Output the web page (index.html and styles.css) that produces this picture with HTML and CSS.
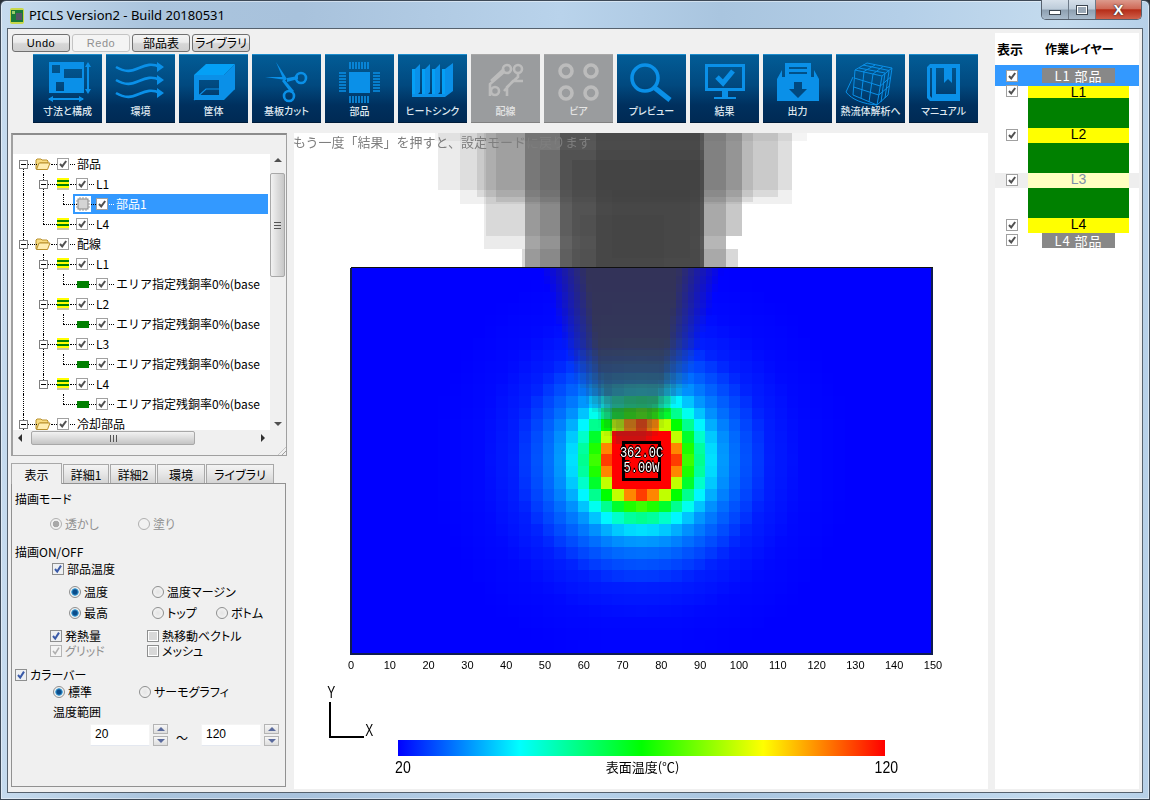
FILE: index.html
```html
<!DOCTYPE html>
<html lang="ja">
<head>
<meta charset="utf-8">
<title>PICLS Version2 - Build 20180531</title>
<link rel="stylesheet" href="styles.css">
</head>
<body>
<svg class="defs" width="0" height="0" aria-hidden="true">
  <symbol id="ck" viewBox="0 0 12 12"><rect x=".5" y=".5" width="11" height="11" fill="#fff" stroke="#a0a0a0"/><path d="M3 6l2.2 2.4L9.2 3" fill="none" stroke="#505050" stroke-width="2"/></symbol>
  <symbol id="fck" viewBox="0 0 12 12"><rect x=".5" y=".5" width="11" height="11" fill="#eef0f2" stroke="#8e8f8f"/><path d="M3 6l2.2 2.6L9 2.6" fill="none" stroke="#3a5aa8" stroke-width="2"/></symbol>
  <symbol id="fckd" viewBox="0 0 12 12"><rect x=".5" y=".5" width="11" height="11" fill="#f4f4f4" stroke="#b4b4b4"/><path d="M3 6l2.2 2.6L9 2.6" fill="none" stroke="#b0b0b0" stroke-width="1.6"/></symbol>
  <symbol id="fcko" viewBox="0 0 12 12"><rect x=".5" y=".5" width="11" height="11" fill="#fff" stroke="#8e8f8f"/><rect x="2" y="2" width="8" height="8" fill="#d8d8d8"/></symbol>
  <symbol id="folder" viewBox="0 0 16 14"><path d="M1 12V3l1-1h4l1 1h5l1 1v2H5L3 12z" fill="#f8dc80" stroke="#b8902c"/><path d="M1.500 12.500L4 6h11l-2.500 6.500z" fill="#ffeeb0" stroke="#b8902c"/></symbol>
</svg>
<div class="window">
  <header class="titlebar">
    <svg class="app-icon" viewBox="0 0 14 16"><rect width="14" height="16" rx="2" fill="#c8d84a"/><rect x="1" y="2" width="12" height="12" fill="#1a7a3a"/><rect x="6" y="5" width="6" height="7" fill="#556"/><rect x="2" y="3" width="3" height="3" fill="#9ccf6a"/></svg>
    <span class="app-title">PICLS Version2 - Build 20180531</span>
    <div class="win-controls">
      <span class="wc wc-min"><i></i></span>
      <span class="wc wc-max"><i></i></span>
      <span class="wc wc-close">X</span>
    </div>
  </header>
  <div class="client">
    <div class="main">
      <div class="top">
        <div class="cmds">
          <button class="cmd">Undo</button>
          <button class="cmd cmd-off">Redo</button>
          <button class="cmd cmd-jp">部品表</button>
          <button class="cmd cmd-jp">ライブラリ</button>
        </div>
        <div class="tools">
          <div class="tool"><svg viewBox="0 0 69 46"><path fill-rule="evenodd" d="M16 7h35v31H16zM19 10v8h8v-8zM31 14v9h18v-9zM23 27v9h8v-9z"/><path class="ln" d="M55 11v25M16 44h34"/><path d="M55 7l-3 5h6zM55 39l-3-5h6zM15 44l5-3v6zM51 44l-5-3v6z"/></svg><span>寸法と構成</span></div>
          <div class="tool"><svg viewBox="0 0 69 46"><path class="ln w" d="M10 12c10 6 16 4 23 1s13-5 21-1M10 25c10 6 16 4 23 1s13-5 21-1M10 38c10 6 16 4 23 1s13-5 21-1"/><path d="M51 7l7 5-7 5zM51 20l7 5-7 5zM51 33l7 5-7 5z"/></svg><span>環境</span></div>
          <div class="tool"><svg viewBox="0 0 69 46"><path class="lt" d="M15 20L27 9h29L45 20z"/><path d="M45 20L56 9v25L45 45z"/><path fill-rule="evenodd" d="M15 20h30v25H15zM20 25v15h20V25z"/><path class="ln n" d="M15 45l12-11h29"/></svg><span>筐体</span></div>
          <div class="tool"><svg viewBox="0 0 69 46"><path d="M24 7l11 17-3 2zM13 22l20 0 1 3z"/><path d="M32 24L42 36l-3 2L30 26z"/><path d="M35 23l11-2 0 3-11 3z"/><circle class="ring" cx="49" cy="23" r="5"/><circle class="ring" cx="37" cy="41" r="5"/></svg><span>基板カット</span></div>
          <div class="tool"><svg viewBox="0 0 69 46"><rect x="24" y="17" width="21" height="21"/><path class="ln p" d="M25 7v7M28 7v7M31 7v7M34 7v7M37 7v7M40 7v7M43 7v7M25 41v7M28 41v7M31 41v7M34 41v7M37 41v7M40 41v7M43 41v7M14 18h7M14 21h7M14 24h7M14 27h7M14 30h7M14 33h7M14 36h7M48 18h7M48 21h7M48 24h7M48 27h7M48 30h7M48 33h7M48 36h7"/></svg><span>部品</span></div>
          <div class="tool"><svg viewBox="0 0 69 46"><path d="M17 14l5-5v28l-5 5zM27 14l5-5v28l-5 5zM37 14l5-5v28l-5 5zM47 14l8-6v28l-8 6z"/><path class="lt" d="M14 14h3v28h-3zM24 14h3v28h-3zM34 14h3v28h-3zM44 14h3v28h-3z"/><path d="M14 39h33v3H14z"/></svg><span>ヒートシンク</span></div>
          <div class="tool tool-off"><svg viewBox="0 0 69 46"><circle class="ring" cx="36" cy="14" r="4"/><circle class="ring" cx="47" cy="14" r="4"/><circle class="ring" cx="24" cy="36" r="4"/><path class="ln w" d="M33 17L19 29v12M47 18v4L36 32v9M52 26H42L33 36M20 26L33 14"/></svg><span>配線</span></div>
          <div class="tool tool-off"><svg viewBox="0 0 69 46"><circle class="ring fat" cx="22" cy="16" r="6"/><circle class="ring fat" cx="47" cy="16" r="6"/><circle class="ring fat" cx="22" cy="38" r="6"/><circle class="ring fat" cx="47" cy="38" r="6"/></svg><span>ビア</span></div>
          <div class="tool"><svg viewBox="0 0 69 46"><circle class="ring fat" cx="28" cy="23" r="13"/><path class="ln heavy" d="M38 33l15 12"/></svg><span>プレビュー</span></div>
          <div class="tool"><svg viewBox="0 0 69 46"><path fill-rule="evenodd" d="M15 9h40v27H15zM18 12v21h34V12z"/><path d="M32 36h6v6h-6zM24 42h22v2H24z"/><path class="ln heavy" d="M27 22l6 6 10-12"/></svg><span>結果</span></div>
          <div class="tool"><svg viewBox="0 0 69 46"><path fill-rule="evenodd" d="M22 8h26v14H22zM26 12v2h18v-2zM26 17v2h18v-2z"/><path d="M14 24l5-9v7h32v-7l5 9v22H14z"/><path class="cut" d="M31 27h8v7h5l-9 9-9-9h5z"/></svg><span>出力</span></div>
          <div class="tool"><svg viewBox="0 0 69 46"><path class="wire" d="M19 15L31 8L56 13L46 21ZM19 15L17 40L41 50L46 21M41 50L52 40L56 13M28 17L25 43M37 19L33 47M18.300 23L44.300 31M17.700 32L42.700 40M49 18L45 47M53 16L49 43M44.300 31L54.700 22M42.700 40L53.400 31M23 13L49 18M27 10L53 15.500M27 17L39 10M37 19L47 11.500M17 22L10 37C16 45 28 49 41 50"/></svg><span>熱流体解析へ</span></div>
          <div class="tool"><svg viewBox="0 0 69 46"><path fill-rule="evenodd" d="M18 12l3-3h30v37H21l-3-3zM21 13v28l2 2V13zM27 13v26h20V13z"/><path d="M35 13h8v15l-4-4-4 4z"/></svg><span>マニュアル</span></div>
        </div>
      </div>
      <div class="work">
        <div class="left">
          <section class="treebox">
            <div class="tree">
              <div class="row"><i class="s t top"><b></b></i><div class="c c0"><svg class="fld"><use href="#folder"/></svg><i class="d d1"></i><svg class="cb"><use href="#ck"/></svg><i class="d d2"></i><span>部品</span></div></div>
              <div class="row"><i class="s v"></i><i class="s t"><b></b></i><div class="c c1"><i class="lay"></i><i class="d d3"></i><svg class="cb"><use href="#ck"/></svg><i class="d d2"></i><span>L1</span></div></div>
              <div class="row"><i class="s v"></i><i class="s v"></i><i class="s l"></i><div class="c c2 sel"><svg class="chip" viewBox="0 0 16 16"><rect width="16" height="16" fill="#fff"/><rect x="3" y="3" width="10" height="10" fill="#d4d4d4" stroke="#888"/><path d="M5 1v2M8 1v2M11 1v2M5 13v2M8 13v2M11 13v2M1 5h2M1 8h2M1 11h2M13 5h2M13 8h2M13 11h2" stroke="#999"/></svg><i class="d d4"></i><svg class="cb"><use href="#ck"/></svg><i class="d d2 w"></i><span>部品1</span></div></div>
              <div class="row"><i class="s v"></i><i class="s l"></i><div class="c c1"><i class="lay"></i><i class="d d3"></i><svg class="cb"><use href="#ck"/></svg><i class="d d2"></i><span>L4</span></div></div>
              <div class="row"><i class="s t"><b></b></i><div class="c c0"><svg class="fld"><use href="#folder"/></svg><i class="d d1"></i><svg class="cb"><use href="#ck"/></svg><i class="d d2"></i><span>配線</span></div></div>
              <div class="row"><i class="s v"></i><i class="s t"><b></b></i><div class="c c1"><i class="lay"></i><i class="d d3"></i><svg class="cb"><use href="#ck"/></svg><i class="d d2"></i><span>L1</span></div></div>
              <div class="row"><i class="s v"></i><i class="s v"></i><i class="s l"></i><div class="c c3"><i class="cu"></i><i class="d d5"></i><svg class="cb"><use href="#ck"/></svg><i class="d d2"></i><span>エリア指定残銅率0%(base</span></div></div>
              <div class="row"><i class="s v"></i><i class="s t"><b></b></i><div class="c c1"><i class="lay"></i><i class="d d3"></i><svg class="cb"><use href="#ck"/></svg><i class="d d2"></i><span>L2</span></div></div>
              <div class="row"><i class="s v"></i><i class="s v"></i><i class="s l"></i><div class="c c3"><i class="cu"></i><i class="d d5"></i><svg class="cb"><use href="#ck"/></svg><i class="d d2"></i><span>エリア指定残銅率0%(base</span></div></div>
              <div class="row"><i class="s v"></i><i class="s t"><b></b></i><div class="c c1"><i class="lay"></i><i class="d d3"></i><svg class="cb"><use href="#ck"/></svg><i class="d d2"></i><span>L3</span></div></div>
              <div class="row"><i class="s v"></i><i class="s v"></i><i class="s l"></i><div class="c c3"><i class="cu"></i><i class="d d5"></i><svg class="cb"><use href="#ck"/></svg><i class="d d2"></i><span>エリア指定残銅率0%(base</span></div></div>
              <div class="row"><i class="s v"></i><i class="s l"><b></b></i><div class="c c1"><i class="lay"></i><i class="d d3"></i><svg class="cb"><use href="#ck"/></svg><i class="d d2"></i><span>L4</span></div></div>
              <div class="row"><i class="s v"></i><i class="s"></i><i class="s l"></i><div class="c c3"><i class="cu"></i><i class="d d5"></i><svg class="cb"><use href="#ck"/></svg><i class="d d2"></i><span>エリア指定残銅率0%(base</span></div></div>
              <div class="row"><i class="s t"><b></b></i><div class="c c0"><svg class="fld"><use href="#folder"/></svg><i class="d d1"></i><svg class="cb"><use href="#ck"/></svg><i class="d d2"></i><span>冷却部品</span></div></div>
            </div>
            <div class="vbar"><i class="tri up"></i><div class="vthumb"><em></em></div><i class="tri dn"></i></div>
            <div class="hbar"><i class="tri lf"></i><div class="hthumb"><em></em></div><i class="tri rt"></i></div>
            <i class="grip"></i>
          </section>
          <nav class="tabs">
            <span class="tab tab-on">表示</span><span class="tab t46">詳細1</span><span class="tab t46">詳細2</span><span class="tab t48">環境</span><span class="tab t68">ライブラリ</span>
          </nav>
          <section class="panel">
            <p class="head">描画モード</p>
            <div class="opt o-mode dis"><span class="o w88"><i class="rd rd-dis on"></i>透かし</span><span class="o"><i class="rd rd-dis"></i>塗り</span></div>
            <p class="head h2">描画ON/OFF</p>
            <div class="opt o-part"><span class="o"><svg class="fc"><use href="#fck"/></svg>部品温度</span></div>
            <div class="opt o-r1"><span class="o w83"><i class="rd on"></i>温度</span><span class="o"><i class="rd"></i>温度マージン</span></div>
            <div class="opt o-r2"><span class="o w83"><i class="rd on"></i>最高</span><span class="o w64"><i class="rd"></i>トップ</span><span class="o"><i class="rd"></i>ボトム</span></div>
            <div class="opt o-c1"><span class="o w97"><svg class="fc"><use href="#fck"/></svg>発熱量</span><span class="o"><svg class="fc"><use href="#fcko"/></svg>熱移動ベクトル</span></div>
            <div class="opt o-c2"><span class="o w97 grey"><svg class="fc"><use href="#fckd"/></svg>グリッド</span><span class="o"><svg class="fc"><use href="#fcko"/></svg>メッシュ</span></div>
            <div class="opt o-bar"><span class="o"><svg class="fc"><use href="#fck"/></svg>カラーバー</span></div>
            <div class="opt o-std"><span class="o w86"><i class="rd on"></i>標準</span><span class="o"><i class="rd"></i>サーモグラフィ</span></div>
            <p class="head h3">温度範囲</p>
            <div class="range">
              <span class="num">20</span><span class="spin"><span class="spb"><i class="tri up bl"></i></span><span class="spb"><i class="tri dn bl"></i></span></span>
              <span class="tilde">～</span>
              <span class="num">120</span><span class="spin"><span class="spb"><i class="tri up bl"></i></span><span class="spb"><i class="tri dn bl"></i></span></span>
            </div>
          </section>
        </div>
        <div class="chart">
          <canvas id="plate" width="694" height="656"></canvas>
          <p class="note">もう一度「結果」を押すと、設定モードに戻ります</p>
          <div class="hot"><span>362.0C</span><span>5.00W</span></div>
          <div class="ticks"><span>0</span><span>10</span><span>20</span><span>30</span><span>40</span><span>50</span><span>60</span><span>70</span><span>80</span><span>90</span><span>100</span><span>110</span><span>120</span><span>130</span><span>140</span><span>150</span></div>
          <div class="axes"><span class="ay">Y</span><span class="ax">X</span></div>
          <div class="legend">
            <div class="gradbar"></div>
            <div class="leg-text"><span class="big">20</span><span>表面温度(℃)</span><span class="big">120</span></div>
          </div>
        </div>
      </div>
    </div>
    <aside class="layers">
      <div class="lhead"><span class="lh1">表示</span><span class="lh2">作業レイヤー</span></div>
      <div class="lrow lsel h21"><svg class="cb m5"><use href="#ck"/></svg><div class="tag m3">L1 部品</div></div>
      <div class="lrow h12"><svg class="cb mn1"><use href="#ck"/></svg><div class="bar yl">L1</div></div>
      <div class="lrow h30"><div class="bar gr off"></div></div>
      <div class="lrow h15"><svg class="cb m1"><use href="#ck"/></svg><div class="bar yl">L2</div></div>
      <div class="lrow h30"><div class="bar gr off"></div></div>
      <div class="lrow h15 lmuted"><svg class="cb m1"><use href="#ck"/></svg><div class="bar pale">L3</div></div>
      <div class="lrow h30"><div class="bar gr off"></div></div>
      <div class="lrow h15"><svg class="cb m1"><use href="#ck"/></svg><div class="bar yl">L4</div></div>
      <div class="lrow h15"><svg class="cb m1"><use href="#ck"/></svg><div class="tag">L4 部品</div></div>
    </aside>
  </div>
</div>
<script src="plate.js"></script>
</body>
</html>
```
FILE: styles.css
```css
* { box-sizing: border-box; }
html, body { margin: 0; padding: 0; height: 100%; background: #2a3038; overflow: hidden; }
body { font-family: "Noto Sans CJK JP", "Noto Sans", sans-serif; font-size: 12px; color: #000; font-feature-settings: "palt"; }
.defs { position: absolute; }
p { margin: 0; }
i, em { font-style: normal; }

.window {
  width: 1150px; height: 800px; display: flex; flex-direction: column;
  border: 1px solid #3e4a58; border-radius: 6px 6px 0 0;
  background: linear-gradient(90deg, #c6dbee 0, #aac4dd 150px, #a8c2dc 300px, #b9d3eb 560px, #a9c5df 720px, #b4cfe8 900px, #c4dbee 1060px, #b6d0e8 1150px);
  box-shadow: inset 0 0 0 1px rgba(255,255,255,.45);
}
.titlebar { height: 27px; flex: none; display: flex; align-items: center; position: relative; padding-left: 9px; }
.app-icon { width: 14px; height: 16px; margin-right: 5px; margin-top: 2px; }
.app-title { font-family: "Noto Sans", sans-serif; font-size: 13px; margin-top: 1px; }
.win-controls {
  position: absolute; top: -1px; right: 7px; height: 20px; display: flex;
  border: 1px solid #56616e; border-top: 0; border-radius: 0 0 5px 5px; overflow: hidden;
}
.wc { display: flex; align-items: center; justify-content: center; background: linear-gradient(#d6e0ea 0, #bccbd9 48%, #8d9fb0 52%, #a9bbcc 100%); border-right: 1px solid #6d7a88; }
.wc-min { width: 27px; }
.wc-min i { width: 12px; height: 5px; margin-top: 5px; border: 1px solid #3c4650; background: #fff; }
.wc-max { width: 27px; }
.wc-max i { width: 12px; height: 10px; border: 2px solid #fff; outline: 1px solid #3c4650; outline-offset: -1px; background: #9aa8b6; }
.wc-close { width: 45px; border-right: 0; color: #fff; font: bold 15px "Liberation Sans", sans-serif; text-shadow: 0 0 1px #333, 0 0 2px #333; background: linear-gradient(#dc9a8c 0, #cf6a58 45%, #b62d18 52%, #d0604a 100%); }

.client { flex: 1; display: flex; margin: 0 6px 6px 6px; border: 1px solid #56626e; background: #f0f0f0; min-height: 0; height: 764px; }
.main { flex: 1; display: flex; flex-direction: column; min-width: 0; padding-left: 3px; }

.top { height: 104px; flex: none; }
.cmds { display: flex; gap: 2px; padding: 5px 0 0 1px; height: 23px; }
.cmd {
  width: 58px; height: 18px; padding: 0; border: 1px solid #707070; border-radius: 3px;
  background: linear-gradient(#f4f4f4 0, #ebebeb 45%, #d6d6d6 55%, #cfcfcf 100%);
  font: 11px "Liberation Sans", sans-serif; letter-spacing: .6px; color: #000;
}
.cmd-jp { font: 12px "Noto Sans CJK JP", sans-serif; letter-spacing: 0; line-height: 14px; font-feature-settings: "palt"; }
.cmd-off { border-color: #c4c4c4; background: #f4f4f4; color: #909090; }
.tools { display: flex; gap: 4px; padding: 2px 0 0 22px; }
.tool {
  width: 69px; height: 69px; flex: none; display: flex; flex-direction: column; align-items: center;
  border-top: 1px solid #1d8ccc; border-bottom: 1px solid #001c3a;
  background: linear-gradient(#025c96 0, #01497f 45%, #00305e 75%, #002a54 100%);
  color: #dfe8f0; font-size: 10px; font-weight: 500;
}
.tool svg { width: 69px; height: 46px; margin-bottom: 3px; fill: #0a90e8; overflow: visible; }
.tool span { line-height: 14px; white-space: nowrap; }
.tool-off { background: #9a9c9e; border-top-color: #a8a8a8; border-bottom-color: #808080; color: #e4e4e4; }
.tool-off svg { fill: #bcbcbc; }
.tool-off .ln, .tool-off .ring { stroke: #bcbcbc; }
.ln { fill: none; stroke: #0a90e8; stroke-width: 2; }
.ln.w { stroke-width: 2.6; }
.ln.n { stroke-width: 1.2; }
.ln.p { stroke-width: 1.6; }
.ln.heavy { stroke-width: 5; }
.lt { fill: #04a0f6; }
.ring { fill: none; stroke: #0a90e8; stroke-width: 2.6; }
.ring.fat { stroke-width: 3.6; }
.cut { fill: #01497f; }
.wire { fill: none; stroke: #0a90e8; stroke-width: 1; }

.work { flex: 1; display: flex; gap: 7px; min-height: 0; padding-bottom: 3px; }

.left { width: 276px; flex: none; display: flex; flex-direction: column; margin-bottom: 2px; }
.treebox { height: 323px; flex: none; position: relative; border: 1px solid #a0a0a0; border-top: 2px solid #8c8c8c; border-left: 2px solid #a0a0a0; padding-top: 19px; }
.tree { width: 257px; height: 276px; background: #fff; overflow: hidden; font-feature-settings: normal; }
.row { height: 20px; display: flex; align-items: center; white-space: nowrap; line-height: 20px; }
.s { width: 20px; height: 20px; flex: none; position: relative; display: flex; align-items: center; justify-content: center; }
.v::before, .t::before { content: ""; position: absolute; left: 10px; top: 0; bottom: 0; border-left: 1px dotted #000; }
.l::before { content: ""; position: absolute; left: 10px; top: 0; height: 10px; border-left: 1px dotted #000; }
.t.top::before { top: 10px; }
.t::after, .l::after { content: ""; position: absolute; left: 10px; top: 10px; width: 14px; border-top: 1px dotted #000; }
.s b { position: relative; z-index: 1; width: 9px; height: 9px; margin-left: 1px; border: 1px solid #808080; background: linear-gradient(#000, #000) center / 5px 1px no-repeat, #fff; }
.c { flex: 1; display: flex; align-items: center; height: 20px; min-width: 0; overflow: hidden; }
.c0 { padding-left: 2px; }
.c1 { padding-left: 4px; }
.c2 { padding-left: 2px; }
.c3 { padding-left: 4px; }
.sel { background: #3399ff; color: #fff; margin-right: 2px; }
.fld { width: 16px; height: 14px; flex: none; }
.chip { width: 16px; height: 16px; flex: none; }
.cb { width: 12px; height: 12px; flex: none; display: block; }
.lay { width: 12px; height: 12px; flex: none; background: linear-gradient(#ffff00 0 2px, #008000 2px 4px, #ffff00 4px 6px, #008000 6px 8px, #ffff00 8px 10px, #c8c8a0 10px 12px); }
.cu { width: 12px; height: 7px; flex: none; background: #008000; }
.d { flex: none; border-top: 1px dotted #000; height: 0; }
.d.w { border-top-color: #fff; }
.d1 { width: 6px; }
.d2 { width: 5px; margin: 0 2px 0 1px; }
.d3 { width: 6px; margin-left: 1px; }
.d4 { width: 5px; }
.d5 { width: 7px; }
.vbar { position: absolute; left: 257px; top: 19px; width: 15px; height: 276px; display: flex; flex-direction: column; align-items: center; justify-content: space-between; padding: 4px 0; background: #f0f0f0; }
.vthumb { position: absolute; top: 19px; left: 0; width: 15px; height: 104px; border: 1px solid #a8a8a8; border-radius: 2px; background: linear-gradient(90deg, #f2f2f2, #dcdcdc 50%, #c8c8c8); display: flex; align-items: center; justify-content: center; }
.vthumb em { width: 7px; height: 7px; background: repeating-linear-gradient(#555 0 1px, transparent 1px 3px); }
.hbar { position: absolute; left: 0; top: 295px; width: 257px; height: 15px; display: flex; align-items: center; justify-content: space-between; padding: 0 5px; background: #f0f0f0; }
.hthumb { position: absolute; left: 18px; top: 1px; width: 164px; height: 14px; border: 1px solid #a8a8a8; border-radius: 2px; background: linear-gradient(#f2f2f2, #dcdcdc 50%, #c4c4c4); display: flex; align-items: center; justify-content: center; }
.hthumb em { width: 7px; height: 7px; background: repeating-linear-gradient(90deg, #555 0 1px, transparent 1px 3px); }
.grip { position: absolute; right: 0; bottom: 0; width: 8px; height: 8px; background: repeating-linear-gradient(135deg, transparent 0 2px, #a0a0a0 2px 3px); clip-path: polygon(100% 0, 100% 100%, 0 100%); }
.tri { width: 0; height: 0; flex: none; border: 4px solid transparent; }
.tri.up { border-top: 0; border-bottom: 4px solid #505050; }
.tri.dn { border-bottom: 0; border-top: 4px solid #505050; }
.tri.lf { border-left: 0; border-right: 4px solid #303030; }
.tri.rt { border-right: 0; border-left: 4px solid #303030; }
.tri.bl { box-sizing: content-box; }
.tri.bl.up { border-bottom-color: #5a6a9c; }
.tri.bl.dn { border-top-color: #5a6a9c; }

.tabs { display: flex; gap: 1px; margin-top: 7px; height: 20px; flex: none; position: relative; z-index: 1; }
.tab { width: 51px; display: flex; align-items: center; justify-content: center; font-size: 12px; margin-top: 1px; border: 1px solid #a8a8a8; border-bottom: 0; background: linear-gradient(#f4f4f4, #e6e6e6 50%, #d4d4d4); }
.tab-on { margin-top: 0; height: 21px; background: #f0f0f0; }
.t46 { width: 46px; }
.t48 { width: 48px; }
.t68 { width: 68px; }
.panel { flex: 1; margin-right: 1px; border: 1px solid #919191; background: #f0f0f0; padding: 7px 0 0 3px; line-height: 16px; }
.head { height: 16px; }
.h2 { margin-top: 12px; }
.h3 { margin: 4px 0 0 38px; }
.opt { display: flex; height: 16px; align-items: center; }
.o { display: flex; align-items: center; flex: none; white-space: nowrap; }
.rd {
  width: 12px; height: 12px; margin-right: 3px; flex: none; border-radius: 50%;
  border: 1px solid #8e8f8f; background: radial-gradient(circle, #e4e4e4, #f8f8f8);
}
.rd.on { background: radial-gradient(circle, #0a4c8a 0 2px, #3fa0d8 3.4px, #f0f0f0 4px); }
.rd-dis { border-color: #b0b0b0; background: #f2f2f2; }
.rd-dis.on { background: radial-gradient(circle, #a8a8a8 0 3px, #f2f2f2 3.6px); }
.fc { width: 12px; height: 12px; margin-right: 3px; flex: none; }
.dis, .grey { color: #909090; }
.o-mode { margin: 9px 0 0 35px; }
.o-part { margin: 1px 0 0 37px; }
.o-r1 { margin: 7px 0 0 54px; }
.o-r2 { margin: 5px 0 0 54px; }
.o-c1 { margin: 7px 0 0 35px; }
.o-c2 { margin: -1px 0 0 35px; }
.o-bar { margin: 8px 0 0 0; }
.o-std { margin: 1px 0 0 38px; }
.w88 { width: 88px; }
.w83 { width: 83px; }
.w64 { width: 64px; }
.w97 { width: 97px; }
.w86 { width: 86px; }
.range { display: flex; align-items: flex-start; margin: 4px 0 0 75px; }
.num { width: 60px; height: 22px; background: #fff; padding: 1px 0 0 4px; border: 1px solid #f4f4f4; border-bottom-color: #e4e8f0; font-family: "Liberation Sans Narrow", "Liberation Sans", sans-serif; font-size: 12px; }
.spin { width: 15px; height: 22px; margin-left: 3px; display: flex; flex-direction: column; gap: 2px; }
.spb { flex: 1; display: flex; align-items: center; justify-content: center; border: 1px solid #b4b4b4; background: linear-gradient(#f6f6f6, #dedede); }
.tilde { width: 34px; text-align: center; padding: 6px 4px 0 0; margin-left: -1px; }

.chart { width: 694px; flex: none; height: 656px; position: relative; background: #fff; overflow: hidden; }
#plate { position: absolute; left: 0; top: 0; display: block; }
.note { position: absolute; left: -1px; top: 0; color: #7e7e7e; font-size: 13px; line-height: 18px; white-space: nowrap; font-feature-settings: normal; }
.hot { position: absolute; left: 328px; top: 308px; width: 39px; height: 40px; border: 3px solid #000; display: flex; flex-direction: column; align-items: center; justify-content: center; font: 12px/15px "Liberation Mono", monospace; color: #fff; text-shadow: 1px 0 #000, -1px 0 #000, 0 1px #000, 0 -1px #000; white-space: nowrap; }
.hot span { display: block; transform: scaleY(1.2); }
.ticks { position: absolute; left: 57px; top: 525px; width: 582px; display: flex; justify-content: space-between; font: 11px/14px "Liberation Sans Narrow", "Liberation Sans", sans-serif; }
.ticks span { width: 0; display: flex; justify-content: center; white-space: nowrap; }
.axes { position: absolute; left: 35px; top: 569px; width: 35px; height: 36px; border-left: 2px solid #000; border-bottom: 2px solid #000; font: 16px/16px "Liberation Sans Narrow", "Liberation Sans", sans-serif; }
.ay { position: absolute; left: -5px; top: -17px; transform: scaleX(.75); }
.ax { position: absolute; left: 33px; top: 21px; transform: scaleX(.75); }
.legend { position: absolute; left: 104px; top: 607px; width: 487px; }
.gradbar { height: 16px; background: linear-gradient(90deg, #0000ff 0, #00ffff 25%, #00ff00 50%, #ffff00 75%, #ff0000 100%); }
.leg-text { display: flex; justify-content: space-between; margin: 3px -15px 0 -4px; font-size: 13px; line-height: 16px; }
.big { font: 16px/18px "Liberation Sans Narrow", "Liberation Sans", sans-serif; transform: scaleX(.88); }

.layers { width: 144px; flex: none; margin: 4px 3px 3px 7px; background: #fff; }
.lhead { height: 32px; display: flex; align-items: center; font-weight: 700; white-space: nowrap; }
.lh1 { width: 50px; padding-left: 2px; font-size: 13px; }
.lhead span { line-height: 32px; }
.lrow { display: flex; align-items: flex-start; padding-left: 11px; }
.lrow .cb { margin-right: 10px; }
.lsel { background: #3399ff; }
.lmuted { background: #eeeeee; }
.h21 { height: 21px; }
.h12 { height: 12px; }
.h15 { height: 15px; }
.h30 { height: 30px; }
.m5 { margin-top: 5px; }
.m3 { margin-top: 3px; }
.m1 { margin-top: 1px; }
.mn1 { margin-top: -1px; }
.bar { width: 101px; height: 100%; text-align: center; font: 14px/13px "Liberation Sans", sans-serif; flex: none; }
.bar.off { margin-left: 22px; background: #008000; }
.yl { background: #ffff00; }
.pale { background: #ffffc0; color: #8090a8; }
.tag { width: 73px; height: 15px; margin-left: 14px; background: #888888; color: #fff; text-align: center; font-size: 13px; line-height: 15px; letter-spacing: 1px; flex: none; white-space: nowrap; }
```
FILE: plate.js
```js
(function () {
  var ctx = document.getElementById('plate').getContext('2d');
  var OX = 294, OY = 133;
  var L = 351, R = 932, T = 267, B = 655, CX = 641.5, CY = 460, W = 11.62;
  var table = [[0,1],[2.83,1],[3,.94],[3.16,.87],[3.6,.69],[4,.56],[4.24,.5],[5,.36],[5.4,.3],[6,.22],[7,.15],[8,.11],[9,.08],[11,.03],[14,.008],[18,0],[99,0]];
  var stops = [[0,0,255],[0,255,255],[0,255,0],[255,255,0],[255,0,0]];

  function level(r) {
    for (var i = 1; i < table.length; i++) {
      if (r <= table[i][0]) {
        var a = table[i - 1], b = table[i];
        return a[1] + (b[1] - a[1]) * (r - a[0]) / (b[0] - a[0]);
      }
    }
    return 0;
  }
  function colour(t) {
    var p = Math.min(t * 4, 3.999), k = Math.floor(p), f = p - k, a = stops[k], b = stops[k + 1];
    return 'rgb(' + a.map(function (v, i) { return Math.round(v + (b[i] - v) * f); }).join(',') + ')';
  }
  function box(x0, y0, x1, y1) { ctx.fillRect(x0 - OX, y0 - OY, x1 - x0, y1 - y0); }

  ctx.fillStyle = '#0000ff';
  box(L, T, R, B);
  for (var j = -20; j <= 20; j++) {
    for (var i = -26; i <= 26; i++) {
      var x0 = Math.max(L, Math.round(CX + (i - .5) * W)), x1 = Math.min(R, Math.round(CX + (i + .5) * W));
      var y0 = Math.max(T, Math.round(CY + (j - .5) * W)), y1 = Math.min(B, Math.round(CY + (j + .5) * W));
      if (x1 <= x0 || y1 <= y0) continue;
      ctx.fillStyle = colour(level(Math.sqrt(i * i + j * j)));
      box(x0, y0, x1, y1);
    }
  }
  ctx.fillStyle = '#101c50';
  box(350, 268, 352, 655);
  box(350, 653, 933, 655);
  box(931, 268, 933, 655);
  ctx.fillStyle = '#101010';
  box(351, 267, 933, 268);

  var smoke = [
    [435,807,133,141,.06],[438,792,133,190,.1],[460,792,133,204,.08],[477,778,133,197,.12],
    [486,742,133,236,.1],[484,726,133,249,.1],[496,753,133,202,.12],[522,738,249,267,.2],
    [525,704,133,267,.4],[704,726,133,267,.3],[726,742,133,236,.2],[540,704,150,267,.18],
    [560,704,133,267,.55],[572,704,160,267,.3],[596,700,133,267,.45],[612,690,190,258,.2],
    [580,664,215,267,.15],[650,700,133,200,.1]
  ];
  smoke.forEach(function (s) {
    ctx.fillStyle = 'rgba(60,60,60,' + s[4] + ')';
    box(s[0], s[2], s[1], s[3]);
  });

  // the same stack seen through the plate: it fades and narrows towards the hot spot
  for (var y = 268; y < 440; y += 8) {
    var half = y < 380 ? 90 - (y - 268) * .3 : 56 - (y - 380) * .6;
    var peak = y < 340 ? .85 : y < 400 ? .85 - (y - 340) * .005 : .55 - (y - 400) * .008;
    for (var x = 520; x < 744; x += 6) {
      var u = Math.abs(x + 3 - 632) / half;
      var alpha = peak * Math.min(1, Math.max(0, (1 - u) * 2));
      if (alpha <= 0) continue;
      ctx.fillStyle = 'rgba(60,60,60,' + alpha.toFixed(3) + ')';
      box(x, y, x + 6, y + 8);
    }
  }
})();
```
